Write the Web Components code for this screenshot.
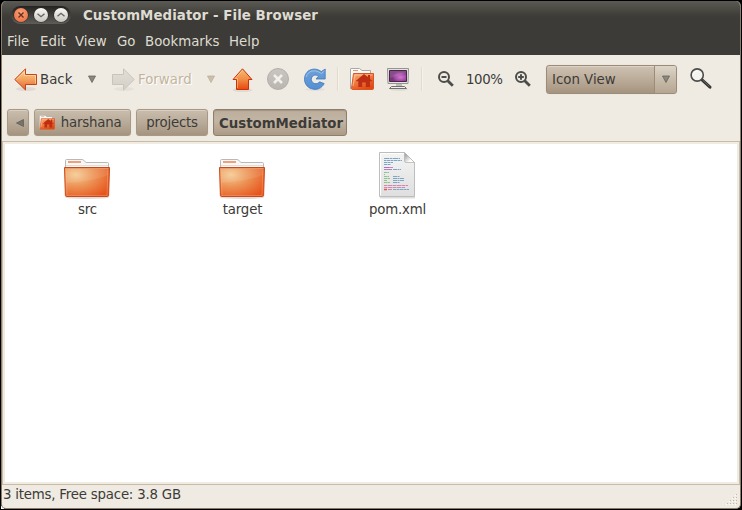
<!DOCTYPE html>
<html lang="en"><head><meta charset="utf-8"><title>CustomMediator - File Browser</title>
<style>
html,body{margin:0;width:742px;height:510px;overflow:hidden;background:#000}
body{font:13.33px/16px "DejaVu Sans",sans-serif;color:#3c3b37}
</style></head><body>
<file-browser></file-browser>
<script>
const define=(name,css,html)=>customElements.define(name,class extends HTMLElement{
  constructor(){super();this.attachShadow({mode:'open'}).innerHTML=`<style>*{box-sizing:border-box}:host{box-sizing:border-box}${css}</style>${typeof html==='function'?html(this):html}`;}
});

const homeFolder=`<defs><linearGradient id="h" x2=".6" y2="1"><stop stop-color="#f8b178"/><stop offset=".6" stop-color="#ec7138"/><stop offset="1" stop-color="#e04a14"/></linearGradient></defs>
<path d="M.5 21V1Q.5.5 1 .5H9.5L12 2.5H20.5V8" fill="#fafafa" stroke="#a9a9a6"/><path d="M3 2.5H8" stroke="#ef9563"/><path d="M1.5 20.5 3.5 5.5H23.5V20.5Q23.5 21.5 22.5 21.5H2.5Q1.5 21.5 1.5 20.5Z" fill="url(#h)" stroke="#dd5420"/><path d="M3 18 5 7H22.5" fill="none" stroke="#ffd5b0" opacity=".6"/><path d="M14 6 5.5 13.2H8.3V19H12.2V14.5H15.8V19H20V13.2H22.6L20 11V7H18V9.2Z" fill="#bd2e12"/>`;

const icons={
back:[24,24,`<defs><linearGradient id="a" x2="0" y2="1"><stop stop-color="#fbd69b"/><stop offset=".5" stop-color="#f3a35e"/><stop offset="1" stop-color="#e4622c"/></linearGradient></defs><ellipse cx="12" cy="21" rx="10" ry="2" fill="#0001"/><path d="M.8 11.5 11.5.8V6.5H22.5V16.5H11.5V22Z" fill="url(#a)" stroke="#c8431a"/><path d="M2.5 11.5 10.5 3.5V7.5H21.5V15.5" fill="none" stroke="#ffe5b9" opacity=".6"/>`],
forward:[24,24,`<defs><linearGradient id="a" x2="0" y2="1"><stop stop-color="#e3dfd7"/><stop offset="1" stop-color="#d3cec6"/></linearGradient></defs><ellipse cx="12" cy="21" rx="10" ry="2" fill="#0000000a"/><path d="M22.2 11.5 11.5.8V6.5H.5V16.5H11.5V22Z" fill="url(#a)" stroke="#c9c4bb"/>`],
up:[22,24,`<defs><linearGradient id="a" x2="0" y2="1"><stop stop-color="#f5bd78"/><stop offset=".5" stop-color="#f28d45"/><stop offset="1" stop-color="#e9470d"/></linearGradient></defs><ellipse cx="10.5" cy="22" rx="10" ry="2" fill="#0001"/><path d="M10.5.8 20 11.5H16.5V21.5H4.5V11.5H1Z" fill="url(#a)" stroke="#c8330e"/><path d="M5.5 20V10.5H3L10.5 2.3" fill="none" stroke="#ffe0ad" opacity=".5"/>`],
stop:[24,24,`<defs><linearGradient id="a" x2="0" y2="1"><stop stop-color="#c9c5c0"/><stop offset="1" stop-color="#b9b5b0"/></linearGradient></defs><circle cx="11" cy="11" r="10.5" fill="url(#a)" stroke="#b3afaa"/><path d="m7 7 8 8m0-8-8 8" stroke="#f3efea" stroke-width="2.5"/>`],
reload:[24,24,`<defs><linearGradient id="a" x2="0" y2="1"><stop stop-color="#6fa1d8"/><stop offset="1" stop-color="#5390d3"/></linearGradient></defs><ellipse cx="11" cy="21.5" rx="10" ry="1.5" fill="#0000000c"/><path d="M17.3 3.6 21.2 1V11H12L14.6 8.1C11.3 5.8 7.3 7.7 7.3 11.3C7.3 15.7 13.3 17.3 15.5 13.8L20.2 15.6C17.8 20.2 13.4 22 9.5 21.2C4.4 20.6.5 16.5.5 11.2C.5 2.2 10-1.9 17.3 3.6Z" fill="url(#a)" stroke="#3d79bd" stroke-width=".8"/><path d="M2 9C4 2.4 11 1 17.4 5.5L20.3 3" fill="none" stroke="#a7caed" opacity=".8"/>`],
home:[24,24,homeFolder],
computer:[24,24,`<defs><radialGradient id="a" cx=".65" cy=".6"><stop stop-color="#d078d4"/><stop offset=".6" stop-color="#a850a8"/><stop offset="1" stop-color="#783579"/></radialGradient></defs><ellipse cx="12" cy="21.5" rx="9" ry="1.5" fill="#0001"/><path d="M9 15H15V19H9Z" fill="#babdb6"/><path d="M.5.5H21.5L21 15.5H1Z" fill="#e3e4e0" stroke="#929590"/><path d="M2.5 2.5H19.5V13.5H2.5Z" fill="url(#a)" stroke="#4c244e"/><path d="M3 10 19 5V3H3Z" fill="#fff" opacity=".12"/><path d="M4.5 18.5H17.5L19.5 20.5H2.5Z" fill="#eeeeec" stroke="#6e716d"/>`],
zoomout:[18,18,`<circle cx="6" cy="6" r="5" fill="none" stroke="#4d4d49" stroke-width="2"/><path d="M3.5 6H8.5" stroke="#4d4d49" stroke-width="2"/><path d="m9.5 9.5 5.3 5.3" stroke="#4d4d49" stroke-width="2.8"/>`],
zoomin:[18,18,`<circle cx="6" cy="6" r="5" fill="none" stroke="#4d4d49" stroke-width="2"/><path d="M3.2 6H8.8M6 3.2V8.8" stroke="#4d4d49" stroke-width="2"/><path d="m9.5 9.5 5.3 5.3" stroke="#4d4d49" stroke-width="2.8"/>`],
search:[24,24,`<path d="m12.3 12.2 7.7 7" stroke="#343532" stroke-width="3" stroke-linecap="round"/><path d="m12.5 12 7 6.3" stroke="#777873" stroke-width=".8"/><circle cx="7.2" cy="7" r="6.1" fill="#f4f3ee" stroke="#4b4d4a" stroke-width="1.6"/><path d="M3.5 7A4 4 0 0 1 8 3" fill="none" stroke="#fff"/>`],
down:[8,8,`<path d="M.5 1H7.5L4 7.5Z" fill="#8c877e" stroke="#66635d" stroke-width=".8"/>`],
downoff:[8,8,`<path d="M.5 1H7.5L4 7.5Z" fill="#cbbfab" stroke="#bdb098" stroke-width=".8"/>`],
left:[8,8,`<path d="M7.5.5V7.5L.5 4Z" fill="#77736b" stroke="#5c5953" stroke-width=".7"/>`],
folder:[48,42,`<defs><radialGradient id="a" cx=".25" cy=".25" r=".9"><stop stop-color="#f4cb93"/><stop offset=".45" stop-color="#ed9356"/><stop offset="1" stop-color="#e7541c"/></radialGradient></defs><ellipse cx="23" cy="38.5" rx="22" ry="1.5" fill="#0002"/><path d="M1.5 10V1.5Q1.5.5 2.5.5H18Q19 .5 20 1.6L22 3.5H43.5Q44.5 3.5 44.5 4.5V10" fill="#f7f7f6" stroke="#b9b9b7"/><path d="M4 3H17" stroke="#efa079" stroke-width="2"/><path d="M2 6.5H44" stroke="#dededc"/><path d="M.5 8.5H45.5L44.6 36.5Q44.5 37.5 43.5 37.5H2.5Q1.5 37.5 1.4 36.5Z" fill="url(#a)" stroke="#cb4718"/><path d="M1.5 9.5H44.5" stroke="#e9a06e" opacity=".8"/><path d="M2 10H44V16Q30 22 2 24Z" fill="#fff" opacity=".09"/><path d="M2.3 11 3 36.5H43L43.8 11" fill="none" stroke="#f8b98c" opacity=".35"/>`],
xml:[38,49,`<defs><linearGradient id="a" x2="0" y2="1"><stop stop-color="#f4f4f4"/><stop offset="1" stop-color="#dfdfdf"/></linearGradient><linearGradient id="b" x2="1" y2="1"><stop offset=".2" stop-color="#aaa"/><stop offset=".7" stop-color="#fff"/></linearGradient></defs><path d="M1 45.5H36" stroke="#0002" stroke-width="2"/><path d="M.5.5H25.5L35.5 10.5V44.5H.5Z" fill="url(#a)" stroke="#bdbdbb"/><path d="M1.5 43.5V1.5H25" fill="none" stroke="#fff"/><path d="M25.5.5V9Q25.5 10.5 27 10.5H35.5Z" fill="url(#b)" stroke="#b5b5b4" stroke-width=".8"/><g fill="none" stroke-width="1.1"><g stroke="#7fa5c4"><path d="M5 6.5H21" stroke-dasharray="5 .5 3 .5"/><path d="M5 8.5H23" stroke-dasharray="2 .5 4 .5"/><path d="M5 10.5H14" stroke-dasharray="3 .5"/><path d="M5 12.5H12" stroke-dasharray="3 .5"/><path d="M14 17.5H22M14 24.5H21M14 26.5H25M14 28.5H25M14 30.5H21" stroke-dasharray="4 .5 2 .5"/><path d="M14 37.5H30" stroke-dasharray="3 .5"/></g><path d="M5 15.5H10" stroke="#a174c4"/><path d="M10 15.5H14" stroke="#d680ad"/><path d="M5 17.5H13" stroke="#b87cc4"/><path d="M5 20.5H10M5 22.5H6M5 24.5H10M5 26.5H11M5 28.5H8M5 30.5H11" stroke="#8ec48c" stroke-dasharray="3 .4"/><path d="M5 33.5H29M5 35.5H26" stroke="#d287ae" stroke-dasharray="3 .5 5 .5"/><path d="M5 37.5H8" stroke="#e25656" stroke-width="1.5"/><path d="M9 37.5H13" stroke="#d680ad"/></g>`]
};
define('ui-icon',':host{display:block;flex:none}svg{display:block}',e=>{
  const n=e.getAttribute('name'),[w,h,s]=icons[n],k=+(e.getAttribute('scale')||1);
  return `<svg width="${w*k}" height="${h*k}" viewBox="0 0 ${w} ${h}">${s}</svg>`;
});
// Fixed-size cell within a bar; low drops the content by one pixel.
define('bar-item',':host{display:block;flex:none;white-space:nowrap}:host([low]){padding-top:2px}:host([disabled]){color:#c2b59e;text-shadow:1px 1px #fff}','<slot></slot>');
define('bar-separator',':host{display:block;flex:none;width:2px;height:24px;background:linear-gradient(90deg,#dcd5c5 50%,#f8f5ef 50%);opacity:.7}','');
define('window-button',`:host{display:block;width:14px;height:14px;border-radius:50%;background:linear-gradient(#fafaf7,#c8c5bd);box-shadow:0 0 0 .6px #2a2926}
:host([kind=close]){background:radial-gradient(circle at 50% 35%,#f8a47b,#ec6435);}svg{display:block}`,e=>`<svg width="14" height="14" fill="none" stroke="${e.getAttribute('kind')==='close'?'#68301d':'#66645f'}" stroke-width="1.4"><path d="${{close:'m4.5 4.5 5 5m0-5-5 5',min:'m3.5 5.7 3.5 3 3.5-3',max:'m3.5 8.3 3.5-3 3.5 3'}[e.getAttribute('kind')]}"/></svg>`);
define('title-bar',`:host{display:flex;height:28px;padding-left:9px;align-items:center;color:#dfdbd2;font-weight:bold;letter-spacing:.08px;background:linear-gradient(#5b5954,#3f3e39 50%,#3c3b37 60%)}
.pod{display:flex;gap:6px;width:60px;height:18px;padding:2px 3px;border-radius:9px;background:linear-gradient(#242320,#5e5d58);margin-right:12px}.t{padding-top:2px}`,
`<div class="pod"><window-button kind="close"></window-button><window-button kind="min"></window-button><window-button kind="max"></window-button></div><div class="t"><slot></slot></div>`);
define('menu-bar',`:host{display:grid;grid-template-columns:33px 35px 42px 28px 84px 40px;height:26px;background:#3c3b37;color:#dfdbd2;padding:5px 0 0 5px}`,'<slot></slot>');
define('tool-bar',`:host{display:flex;height:48px;align-items:center}`,'<slot></slot>');
define('combo-box',`:host{display:flex;flex:none;width:131px;height:29px;border:1px solid #9b8c79;border-radius:3px;background:linear-gradient(#cfc2b2,#bdae9c 45%,#a5947f);box-shadow:inset 0 1px #ddd3c7,0 0 1px #cfc6b9;align-items:center;padding-left:5px}.t{padding-top:2px}
.drop{display:flex;margin-left:auto;align-items:center;justify-content:center;width:22px;height:27px;border-left:1px solid #9b8c79;border-radius:0 2px 2px 0;background:linear-gradient(#ddd5c9,#c7bba9 50%,#b6a793)}`,
'<div class="t"><slot></slot></div><div class="drop"><ui-icon name="down"></ui-icon></div>');
define('path-button',`:host{display:flex;flex:none;height:27px;align-items:center;justify-content:center;border:1px solid #a79986;border-radius:3px;background:linear-gradient(#c9bdad,#b9ab99 50%,#a5947f);box-shadow:inset 0 1px #d8cec1,0 0 1px #cfc6b9;gap:6px;white-space:nowrap;letter-spacing:-.2px}
:host([current]){font-weight:bold;letter-spacing:0;border-color:#8e7f6c;padding:2px 0 0 2px;background:linear-gradient(#bcae9d,#c3b5a4 45%,#ab9a85);box-shadow:inset 0 1px 1px #a29381}`,'<slot></slot>');
define('path-bar',':host{display:flex;height:38px;padding:6px 0 0 5px;gap:5px}','<slot></slot>');
define('file-item',`:host{display:flex;width:155px;flex-direction:column;align-items:center;letter-spacing:-.2px}.i{height:51px;padding-bottom:1px;display:flex;align-items:flex-end}`,
e=>`<div class="i"><ui-icon name="${e.getAttribute('icon')}"></ui-icon></div><slot></slot>`);
define('file-view',`:host{display:flex;height:344px;border:1px solid #c9bba5;background:#fff;box-shadow:inset 0 0 0 2px #f1ece2;padding:9px 0 0 7px;align-items:flex-start}`,'<slot></slot>');
define('status-bar',`:host{display:flex;flex:1;padding:2px 2px 0 1px;justify-content:space-between;letter-spacing:-.21px}svg{display:block;margin-top:6px}`,
`<slot></slot><svg width="12" height="14">${[[10,1],[10,4],[7,4],[10,7],[7,7],[4,7],[10,10],[7,10],[4,10],[1,10]].map(([x,y])=>`<path d="M${x} ${y+.5}h1" stroke="#c5b8a1"/><path d="M${x-1} ${y+1.5}h1" stroke="#fff"/>`).join('')}</svg>`);
define('file-browser',`:host{display:flex;flex-direction:column;width:742px;height:510px;border:1px solid #000;background:linear-gradient(#fff,#fff) left bottom/3px 3px no-repeat #000}
main{display:flex;flex-direction:column;flex:1;border:1px solid #8a7c66;border-top:0;border-radius:5px;overflow:hidden;background:#efebe3}`,
()=>{const it=(x,w,c,a='')=>`<bar-item ${a} style="margin-left:${x}px;width:${w}px">${c}</bar-item>`,ic=(n,a='')=>`<ui-icon name="${n}" ${a}></ui-icon>`;
return `<main><title-bar>CustomMediator - File Browser</title-bar>
<menu-bar><span>File</span><span>Edit</span><span>View</span><span>Go</span><span>Bookmarks</span><span>Help</span></menu-bar>
<tool-bar>${it(12,24,ic('back'),'low')}${it(2,32,'Back','low')}${it(16,8,ic('down'))}${it(16,24,ic('forward'),'low')}${it(2,53,'Forward','disabled low')}${it(16,8,ic('downoff'))}${it(17,22,ic('up'),'low')}${it(13,24,ic('stop'),'low')}${it(13,24,ic('reload'),'low')}<bar-separator style="margin-left:9px"></bar-separator>${it(11,24,ic('home'),'low')}${it(13,24,ic('computer'),'low')}<bar-separator style="margin-left:10px"></bar-separator>${it(15,18,ic('zoomout'),'low')}${it(10,37,'100%','id="level" low')}${it(12,18,ic('zoomin'),'low')}<combo-box style="margin-left:13px">Icon View</combo-box>${it(13,24,ic('search'),'low')}</tool-bar>
<path-bar><path-button style="width:22px;padding-left:3px">${ic('left')}</path-button><path-button style="width:97px;justify-content:flex-start;padding-left:4px">${ic('home','scale=".66"')}<span>harshana</span></path-button><path-button style="width:72px">projects</path-button><path-button current style="width:134px">CustomMediator</path-button></path-bar>
<file-view><file-item icon="folder">src</file-item><file-item icon="folder">target</file-item><file-item icon="xml">pom.xml</file-item></file-view>
<status-bar>3 items, Free space: 3.8 GB</status-bar></main><style>#level{letter-spacing:-.4px}</style>`;});
</script></body></html>
